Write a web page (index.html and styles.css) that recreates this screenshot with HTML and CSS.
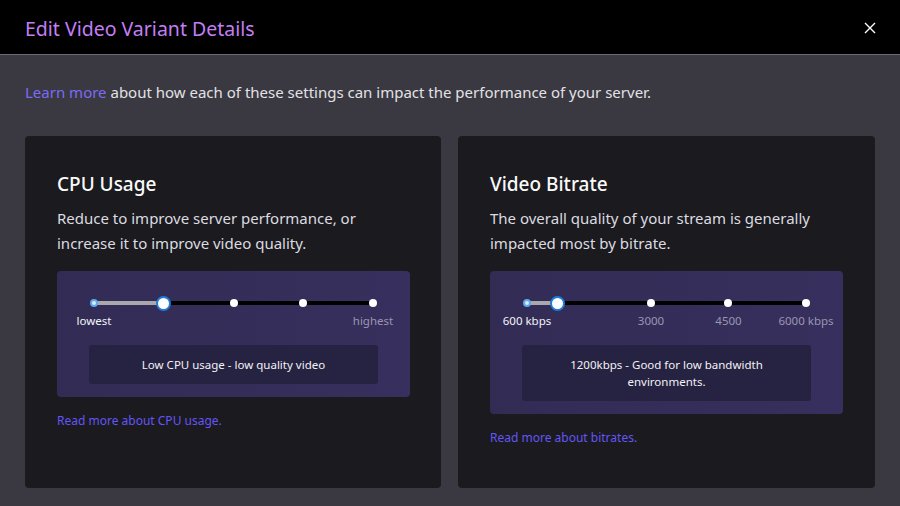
FILE: index.html
```html
<!DOCTYPE html>
<html>
<head>
<meta charset="utf-8">
<link rel="stylesheet" href="styles.css">
</head>
<body>
<div class="modal">
  <header class="modal-header">
    <h1 class="modal-title">Edit Video Variant Details</h1>
    <button class="close-btn" aria-label="Close">
      <svg width="12" height="12" viewBox="0 0 12 12"><path d="M1 1 L11 11 M11 1 L1 11" stroke="#fff" stroke-width="1.4" fill="none"/></svg>
    </button>
  </header>
  <main class="modal-body">
    <p class="intro"><a class="link-learn" href="#">Learn more</a> about how each of these settings can impact the performance of your server.</p>
    <div class="cards">
      <section class="card">
        <h2 class="card-title">CPU Usage</h2>
        <p class="card-desc">Reduce to improve server performance, or increase it to improve video quality.</p>
        <div class="slider-box">
          <div class="slider">
            <div class="track"></div>
            <div class="fill" style="width:25%"></div>
            <span class="dot dot-start" style="left:0%"></span>
            <span class="dot" style="left:50%"></span>
            <span class="dot" style="left:75%"></span>
            <span class="dot" style="left:100%"></span>
            <span class="thumb" style="left:25%"></span>
          </div>
          <div class="marks">
            <span class="mark mark-active" style="left:0%">lowest</span>
            <span class="mark" style="left:100%">highest</span>
          </div>
          <div class="value-box">Low CPU usage - low quality video</div>
        </div>
        <a class="read-more" href="#">Read more about CPU usage.</a>
      </section>
      <section class="card">
        <h2 class="card-title">Video Bitrate</h2>
        <p class="card-desc">The overall quality of your stream is generally impacted most by bitrate.</p>
        <div class="slider-box">
          <div class="slider">
            <div class="track"></div>
            <div class="fill" style="width:11.11%"></div>
            <span class="dot dot-start" style="left:0%"></span>
            <span class="dot" style="left:44.44%"></span>
            <span class="dot" style="left:72.22%"></span>
            <span class="dot" style="left:100%"></span>
            <span class="thumb" style="left:11.11%"></span>
          </div>
          <div class="marks">
            <span class="mark mark-active" style="left:0%">600 kbps</span>
            <span class="mark" style="left:44.44%">3000</span>
            <span class="mark" style="left:72.22%">4500</span>
            <span class="mark" style="left:100%">6000 kbps</span>
          </div>
          <div class="value-box">1200kbps - Good for low bandwidth environments.</div>
        </div>
        <a class="read-more" href="#">Read more about bitrates.</a>
      </section>
    </div>
  </main>
</div>
</body>
</html>
```

FILE: styles.css
```css
* { box-sizing: border-box; }
html, body { margin: 0; padding: 0; }
body {
  width: 900px;
  height: 506px;
  overflow: hidden;
  background: #3a3840;
  font-family: "Noto Sans", "Open Sans", sans-serif;
  color: #e6e6ea;
}
.modal { display: flex; flex-direction: column; height: 506px; }
.modal-header {
  height: 55px;
  background: #000;
  border-bottom: 1px solid #6d6b72;
  display: flex;
  align-items: center;
  justify-content: space-between;
  padding: 2px 24px 0 25px;
  flex-shrink: 0;
}
.modal-title {
  margin: 0;
  font-size: 19.5px;
  font-weight: 400;
  color: #c47ef5;
}
.close-btn {
  background: none;
  border: 0;
  padding: 0;
  width: 12px;
  height: 12px;
  display: flex;
}
.modal-body {
  flex: 1;
  padding: 25px 25px 0 25px;
  background: #3a3840;
}
.intro {
  margin: 0 0 32px 0;
  font-size: 15px;
  line-height: 24px;
  color: #e2e2e6;
}
.link-learn { color: #7b6cf6; text-decoration: none; }
.cards {
  display: grid;
  grid-template-columns: 416px 417px;
  gap: 17px;
}
.card {
  background: #1b1a1f;
  border-radius: 4px;
  height: 352px;
  padding: 36px 32px 0 32px;
}
.card-title {
  margin: 0;
  font-size: 19px;
  font-weight: 500;
  line-height: 24px;
  color: #fafafa;
}
.card-desc {
  margin: 10px 0 15px 0;
  font-size: 15px;
  line-height: 25px;
  color: #dcdce0;
}
.slider-box {
  background: linear-gradient(90deg, #322c55, #372f5d);
  border-radius: 4px;
  padding: 29px 37px 13px 37px;
  width: 353px;
}
.slider {
  position: relative;
  height: 6px;
}
.track {
  position: absolute;
  left: 0; right: 0; top: 1px;
  height: 4px;
  background: #000;
  border-radius: 2px;
}
.fill {
  position: absolute;
  left: 0; top: 1px;
  height: 4px;
  background: #a9a8ad;
}
.dot {
  position: absolute;
  top: 3px;
  width: 8px; height: 8px;
  margin: -4px 0 0 -4px;
  border-radius: 50%;
  background: #fff;
}
.dot-start {
  background: #d9ecff;
  border: 2px solid #5ca9f0;
}
.thumb {
  position: absolute;
  top: 3px;
  width: 15px; height: 15px;
  margin: -7.5px 0 0 -7.5px;
  border-radius: 50%;
  background: #fff;
  border: 2px solid #1f7ad9;
}
.marks {
  position: relative;
  height: 16px;
  margin-top: 7px;
}
.mark {
  position: absolute;
  top: 0;
  transform: translateX(-50%);
  font-size: 11.5px;
  line-height: 16px;
  color: #9a96b2;
  white-space: nowrap;
}
.mark-active { color: #f4f4f6; }
.value-box {
  margin: 16px -5px 0 -5px;
  background: #262242;
  border-radius: 3px;
  padding: 11px 16px 11px 16px;
  font-size: 11.5px;
  line-height: 17px;
  color: #f2f2f4;
  text-align: center;
}
.read-more {
  display: inline-block;
  margin-top: 16px;
  font-size: 12px;
  line-height: 16px;
  color: #6356f6;
  text-decoration: none;
}
```
